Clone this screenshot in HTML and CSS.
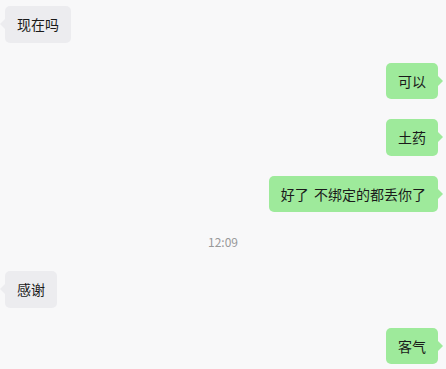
FILE: index.html
```html
<!DOCTYPE html>
<html lang="zh">
<head>
<meta charset="utf-8">
<link rel="stylesheet" href="styles.css">
</head>
<body>
<div class="chat">
  <div class="row left"><div class="bubble">现在吗</div></div>
  <div class="row right"><div class="bubble">可以</div></div>
  <div class="row right"><div class="bubble">土药</div></div>
  <div class="row right"><div class="bubble">好了 不绑定的都丢你了</div></div>
  <div class="time">12:09</div>
  <div class="row left"><div class="bubble">感谢</div></div>
  <div class="row right"><div class="bubble">客气</div></div>
</div>
</body>
</html>
```
FILE: styles.css
```css
html, body {
  margin: 0;
  padding: 0;
  background: #f8f8f9;
}
body {
  font-family: "Noto Sans CJK SC", "Noto Sans", sans-serif;
  width: 446px;
  height: 369px;
  overflow: hidden;
}
.chat {
  display: flex;
  flex-direction: column;
  gap: 20px;
  padding: 6px 8px 0 0;
}
.row {
  display: flex;
}
.row.left {
  justify-content: flex-start;
  padding-left: 5px;
}
.row.right {
  justify-content: flex-end;
}
.bubble {
  position: relative;
  font-size: 14px;
  line-height: 20.5px;
  padding: 8px 12px;
  border-radius: 5px;
  color: #1a1a1a;
  white-space: nowrap;
  word-spacing: 2px;
}
.left .bubble {
  background: #ececef;
}
.right .bubble {
  background: #9eea9b;
}
.bubble::before {
  content: "";
  position: absolute;
  top: 13px;
  border: 5px solid transparent;
}
.left .bubble::before {
  left: -10px;
  border-right-color: #ececef;
}
.right .bubble::before {
  right: -10px;
  border-left-color: #9eea9b;
}
.time {
  text-align: center;
  font-size: 12px;
  line-height: 18px;
  padding-top: 1px;
  color: #999999;
  padding-left: 8px;
}
```
